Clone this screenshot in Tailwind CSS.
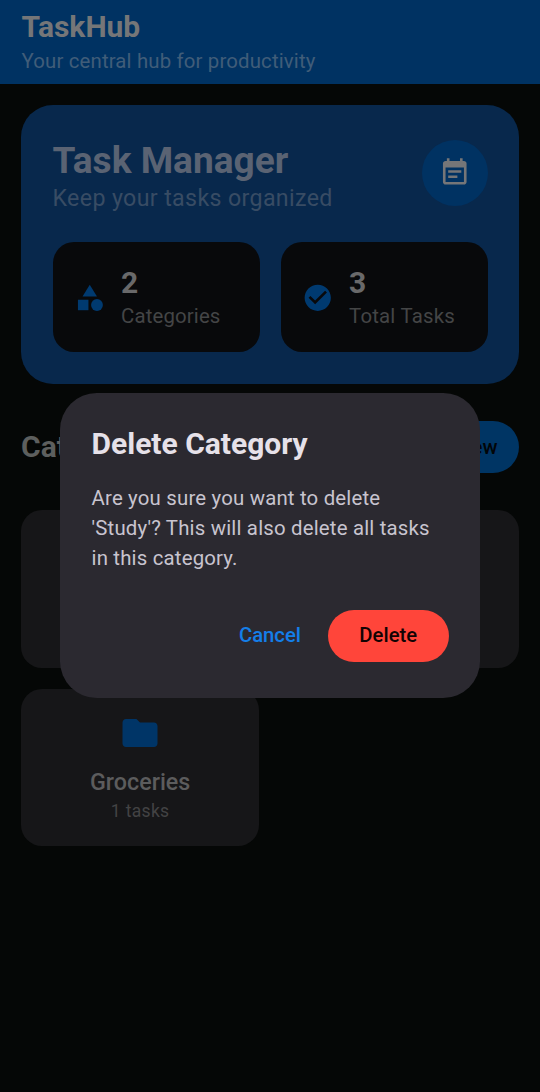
<!DOCTYPE html>
<html lang="en">
<head>
<meta charset="utf-8">
<title>TaskHub</title>
<script src="https://cdn.jsdelivr.net/npm/@tailwindcss/browser@4"></script>
</head>
<body class="bg-[#050706] font-['Roboto',sans-serif] w-[540px] h-[1092px] overflow-hidden relative">
<header class="h-[84px] bg-[#003262] pl-[21.5px] pt-[10px]">
  <h1 class="text-[30px] leading-[34px] font-bold text-[#757678]"><span>TaskHub</span></h1>
  <p class="text-[20.4px] leading-[26px] mt-1 tracking-[0.15px] text-[#405d79]"><span>Your central hub for productivity</span></p>
</header>
<main class="px-[21px] pt-[21px]">
  <section class="h-[279px] rounded-[32px] bg-[#08284c] px-[31.5px] pt-[36px]">
    <div class="flex justify-between h-[101.3px]">
      <div>
        <h2 class="text-[37.1px] leading-[40px] font-bold text-[#5a6373]"><span>Task Manager</span></h2>
        <p class="text-[23.2px] leading-[28px] mt-[3px] tracking-[0.36px] text-[#384c64]"><span>Keep your tasks organized</span></p>
      </div>
      <div class="size-[65.6px] -mt-[0.6px] rounded-full bg-[#003262] flex items-center justify-center">
        <svg class="size-[31.5px] fill-[#757678]" viewBox="0 0 24 24"><path d="M17 10H7v2h10v-2zm2-7h-1V1h-2v2H8V1H6v2H5c-1.11 0-1.99.9-1.99 2L3 19c0 1.1.89 2 2 2h14c1.1 0 2-.9 2-2V5c0-1.1-.9-2-2-2zm0 16H5V8h14v11zm-5-5H7v2h7v-2z"/></svg>
      </div>
    </div>
    <div class="grid grid-cols-2 gap-[21px]">
      <div class="h-[110px] rounded-[21px] bg-[#08090b] flex items-center pl-[21px] gap-4">
        <svg class="size-[31.5px] fill-[#003a70]" viewBox="0 0 24 24"><path d="M12 2l-5.5 9h11z"/><circle cx="17.5" cy="17.5" r="4.5"/><path d="M3 13.5h8v8H3z"/></svg>
        <div>
          <div class="text-[30px] leading-[36px] font-bold text-[#69696a]">2</div>
          <div class="text-[20.4px] leading-[26px] mt-[2px] mb-px tracking-[0.14px] text-[#444546]"><span>Categories</span></div>
        </div>
      </div>
      <div class="h-[110px] rounded-[21px] bg-[#08090b] flex items-center pl-[21px] gap-4">
        <svg class="size-[31.5px] fill-[#003a70]" viewBox="0 0 24 24"><path d="M12 2C6.48 2 2 6.48 2 12s4.48 10 10 10 10-4.48 10-10S17.52 2 12 2zm-2 15l-5-5 1.41-1.41L10 14.17l7.59-7.59L19 8l-9 9z"/></svg>
        <div>
          <div class="text-[30px] leading-[36px] font-bold text-[#69696a]">3</div>
          <div class="text-[20.4px] leading-[26px] mt-[2px] mb-px tracking-[0.2px] text-[#444546]"><span>Total Tasks</span></div>
        </div>
      </div>
    </div>
  </section>
  <div class="flex justify-between items-center mt-[37px] h-[52.4px]">
    <h2 class="text-[30px] leading-[36px] font-bold text-[#5d5f5e]"><span>Cat</span></h2>
    <div class="h-[52.4px] rounded-full bg-[#003564] pl-[21px] pr-[21.5px] flex items-center gap-2 text-[20.3px] font-medium text-[#020508]"><span>New</span></div>
  </div>
  <div class="grid grid-cols-2 gap-x-[21.4px] gap-y-[21.2px] mt-[37px]">
    <div class="h-[157.2px] rounded-[21px] bg-[#161618]"></div>
    <div class="h-[157.2px] rounded-[21px] bg-[#161618]"></div>
    <div class="h-[157.2px] rounded-[21px] bg-[#161618] flex flex-col items-center pt-[23.5px]">
      <svg class="size-[42px] fill-[#003567]" viewBox="0 0 24 24"><path d="M10 4H4c-1.1 0-1.99.9-1.99 2L2 18c0 1.1.9 2 2 2h16c1.1 0 2-.9 2-2V8c0-1.1-.9-2-2-2h-8l-2-2z"/></svg>
      <div class="text-[23.3px] leading-[28px] mt-[14px] font-medium text-[#5c5c5d]"><span>Groceries</span></div>
      <div class="text-[17.5px] leading-[22px] mt-[4px] tracking-[0.33px] text-[#434344]"><span>1 tasks</span></div>
    </div>
  </div>
</main>
<div class="absolute left-[60px] top-[393px] w-[420px] h-[305.4px] rounded-[36.75px] bg-[#2b2930] px-[31.5px] pt-[33px]">
  <h2 class="text-[30px] leading-[36px] font-bold text-[#e6e1e9]"><span>Delete Category</span></h2>
  <p class="text-[20.4px] leading-[29.6px] mt-[22.4px] tracking-[0.18px] text-[#c8c4cf] whitespace-nowrap"><span>Are you sure you want to delete</span><br><span>'Study'? This will also delete all tasks</span><br><span>in this category.</span></p>
  <div class="flex justify-end items-center mt-[36.4px] gap-[27px] text-[20.3px] font-medium">
    <span class="text-[#147ee8]">Cancel</span>
    <div class="w-[120.5px] h-[52px] rounded-full bg-[#ff453a] text-[#120303] flex items-center justify-center"><span>Delete</span></div>
  </div>
</div>
</body>
</html>
